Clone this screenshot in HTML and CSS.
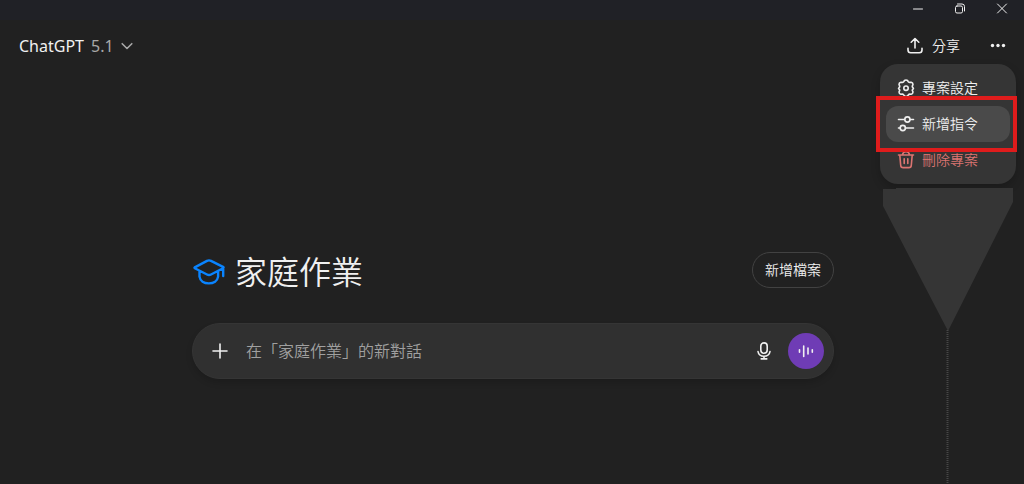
FILE: index.html
```html
<!DOCTYPE html>
<html lang="zh-Hant">
<head>
<meta charset="utf-8">
<meta name="viewport" content="width=device-width, initial-scale=1">
<title>家庭作業</title>
<link rel="stylesheet" href="styles.css">
</head>
<body>
<div class="app">
  <div class="titlebar">
    <button class="win-btn" aria-label="最小化"><svg width="12" height="12" viewBox="0 0 12 12"><path d="M1.500 6h9"/></svg></button>
    <button class="win-btn" aria-label="還原"><svg width="12" height="12" viewBox="0 0 12 12"><rect x="1.500" y="3" width="7" height="7" rx="1.500"/><path d="M3.500 1h4.500a2.500 2.500 0 0 1 2.500 2.500v4.500"/></svg></button>
    <button class="win-btn" aria-label="關閉"><svg width="12" height="12" viewBox="0 0 12 12"><path d="M1.500 1l9 9M10.500 1l-9 9"/></svg></button>
  </div>

  <header class="header">
    <button class="model">ChatGPT <span class="version">5.1</span>
      <svg class="icon" width="12" height="12" viewBox="0 0 12 12"><path d="M1.200 3.700L6 8.500l4.800-4.800"/></svg>
    </button>
    <div class="actions">
      <button class="share">
        <svg class="icon" width="18" height="18" viewBox="0 0 18 18"><path d="M9 11V2M5.200 5.200L9 1.500l3.800 3.700M2 11.200v1.800a2.700 2.700 0 0 0 2.700 2.700h8.600a2.700 2.700 0 0 0 2.700-2.700v-1.800"/></svg>
        <span class="label">分享</span>
      </button>
      <div class="more-wrap">
        <button class="more" aria-label="更多"><svg width="16" height="16" viewBox="0 0 16 16"><circle cx="2.500" cy="7.500" r="1.700"/><circle cx="8" cy="7.500" r="1.700"/><circle cx="13.500" cy="7.500" r="1.700"/></svg></button>
        <div class="menu-layer">
          <div class="menu">
            <button class="item">
              <svg class="icon" width="18" height="18" viewBox="0 0 18 18"><path d="M7.500 1.500Q9 .4 10.500 1.500L11.300 2.700Q11.900 3.400 12.800 3.400L14.200 3.300Q16 3.700 16 5.500L15.400 6.900Q15.100 7.700 15.600 8.400L16.200 9Q16.800 9.700 15.600 10.500Q15.100 11 15.400 11.600L16 13Q15.900 14.900 14.200 15.200L12.800 15.100Q11.900 15.100 11.300 15.900L10.500 17Q9 18 7.500 17L6.700 15.900Q6.100 15.100 5.200 15.100L3.800 15.200Q2.100 14.900 2 13L2.600 11.600Q2.900 11 2.400 10.500Q1.200 9.700 1.800 9L2.400 8.400Q2.900 7.700 2.600 6.900L2 5.500Q2 3.700 3.800 3.300L5.200 3.400Q6.100 3.400 6.700 2.700z"/><circle cx="9" cy="9.200" r="2.200"/></svg>
              <span class="label">專案設定</span>
            </button>
            <button class="item active">
              <svg class="icon" width="18" height="18" viewBox="0 0 18 18"><path d="M1.500 4.500h6M13 4.500h3.500M1.500 13h1.500M8.500 13h8"/><circle cx="10.400" cy="4.500" r="2.600"/><circle cx="5.800" cy="13" r="2.600"/></svg>
              <span class="label">新增指令</span>
            </button>
            <button class="item danger">
              <svg class="icon" width="18" height="18" viewBox="0 0 18 18"><path d="M1.500 4h15M5.500 3.800C5.800 1.800 7 .8 9 .8s3.200 1 3.500 3M2.800 4.300l.9 9.900a2.500 2.500 0 0 0 2.500 2.400h5.600a2.500 2.500 0 0 0 2.500-2.400l.9-9.900M7.200 7.700v4.800M10.800 7.700v4.800"/></svg>
              <span class="label">刪除專案</span>
            </button>
          </div>
          <div class="highlight"></div>
          <svg class="pointer" width="130" height="296" viewBox="0 0 130 296"><path fill="#353535" d="M0 1h13V0h117v14L65 143 0 18z"/><path d="M64.500 142V296" stroke="#474747" stroke-width="2" stroke-dasharray="1 1"/></svg>
        </div>
      </div>
    </div>
  </header>

  <main class="main">
    <div class="title-row">
      <h1 class="title">
        <svg class="cap" width="32" height="32" viewBox="0 0 32 32"><path d="M1.800 11.400L14 4.900q2-1 4 0l12 5.900q1.200.7 0 1.400L18 18.500q-2 1-4 0L1.800 12.200q-.7-.4 0-.8zM6.500 15v5.700c.6 4.300 4.600 6.700 9.300 6.700s8.700-2.400 9.300-6.700V15M30.200 12v8"/></svg>
        家庭作業
      </h1>
      <button class="add-file"><span class="label">新增檔案</span></button>
    </div>
    <form class="composer">
      <button type="button" class="tool" aria-label="附加"><svg class="icon" width="18" height="18" viewBox="0 0 18 18"><path d="M9 2v14M2 9h14"/></svg></button>
      <input class="prompt" type="text" aria-label="新對話" placeholder="在「家庭作業」的新對話">
      <button type="button" class="tool" aria-label="聽寫"><svg class="icon" width="18" height="18" viewBox="0 0 18 18"><rect x="5.800" y=".9" width="6.400" height="10.400" rx="3.200"/><path d="M3 9.500c.5 3.300 2.800 4.800 6 4.800s5.500-1.500 6-4.800M9 14.300v2.500M6.200 16.900h5.600"/></svg></button>
      <button type="button" class="voice" aria-label="語音"><svg width="18" height="18" viewBox="0 0 18 18"><path d="M2.500 7.700v2.600M6.700 4v10.500M11 6v6M15.300 7.700v2.600"/></svg></button>
    </form>
  </main>
</div>
</body>
</html>
```
FILE: styles.css
```css
* { box-sizing: border-box; }
body {
  margin: 0;
  background: #212121;
  color: #f0f0f0;
  font-family: "Open Sans", "Noto Sans CJK TC", sans-serif;
  font-size: 14px;
}
button, input {
  margin: 0;
  padding: 0;
  border: 0;
  background: none;
  color: inherit;
  font: inherit;
}
svg { display: block; flex: none; }
.label { display: block; padding-bottom: 2px; font-weight: 350; }
.icon, .win-btn svg {
  fill: none;
  stroke: currentColor;
  stroke-width: 1.6;
  stroke-linecap: round;
  stroke-linejoin: round;
}
.app {
  display: flex;
  flex-direction: column;
  min-height: 100vh;
  overflow: hidden;
  position: relative;
}
.titlebar {
  display: flex;
  justify-content: flex-end;
  height: 20px;
  padding-right: 1px;
  background: #202126;
}
.win-btn {
  display: flex;
  align-items: center;
  justify-content: center;
  width: 42px;
  height: 17px;
}
.win-btn svg { stroke-width: 1; }
.header {
  display: flex;
  align-items: center;
  justify-content: space-between;
  height: 52px;
  padding: 0 16px 0 19px;
}
.model {
  display: flex;
  align-items: center;
  gap: 7px;
  font-family: "Noto Sans", "Noto Sans CJK TC", sans-serif;
  font-size: 16px;
}
.version, .model .icon { color: #a8a8a8; }
.actions { display: flex; align-items: center; gap: 28px; }
.share { display: flex; align-items: center; gap: 8px; }
.more-wrap { position: relative; }
.more { display: flex; align-items: center; justify-content: center; width: 20px; height: 36px; }
.more svg { fill: #f0f0f0; }
.menu-layer { position: absolute; top: 36px; right: -8px; width: 136px; }
.menu {
  padding: 6px;
  border-radius: 18px;
  background: #353535;
  box-shadow: 0 4px 10px rgba(0, 0, 0, 0.2);
}
.item {
  display: flex;
  align-items: center;
  gap: 7px;
  width: 100%;
  height: 36px;
  padding-left: 11px;
  border-radius: 12px;
}
.item.active { background: #4a4a4a; }
.item.danger { color: #dc7471; }
.highlight {
  position: absolute;
  top: 32px;
  left: -4px;
  right: -1px;
  height: 56px;
  border: 4px solid #df1c1c;
  pointer-events: none;
}
.pointer { position: absolute; top: 124px; left: 3px; fill: none; }
.main {
  width: 100%;
  max-width: 644px;
  margin: 0 auto;
  padding: 180px 0 24px 2px;
}
.title-row { display: flex; align-items: flex-start; justify-content: space-between; }
.title {
  display: flex;
  align-items: center;
  gap: 10px;
  margin: 0;
  padding: 2px 0 0 1px;
  font-size: 32px;
  font-weight: 350;
  line-height: 36px;
}
.cap {
  fill: none;
  stroke: #0a84ff;
  stroke-width: 2.4;
  stroke-linecap: round;
  stroke-linejoin: round;
}
.add-file {
  height: 36px;
  padding: 0 12px;
  border: 1px solid #424242;
  border-radius: 18px;
}
.composer {
  display: flex;
  align-items: center;
  height: 56px;
  margin-top: 33px;
  padding: 0 9px;
  border: 1px solid #353535;
  border-radius: 28px;
  background: #303030;
  box-shadow: 0 4px 6px rgba(0, 0, 0, 0.15);
}
.tool { display: flex; align-items: center; justify-content: center; width: 36px; height: 36px; }
.prompt { flex: 1; min-width: 0; padding-left: 8px; font-size: 16px; font-weight: 350; outline: 0; }
.prompt::placeholder { color: #a0a0a0; opacity: 1; }
.voice {
  display: flex;
  align-items: center;
  justify-content: center;
  width: 36px;
  height: 36px;
  margin-left: 6px;
  border-radius: 50%;
  background: #6f3cb5;
}
.voice svg { stroke: #f0f0f0; stroke-width: 1.6; stroke-linecap: round; }
```
